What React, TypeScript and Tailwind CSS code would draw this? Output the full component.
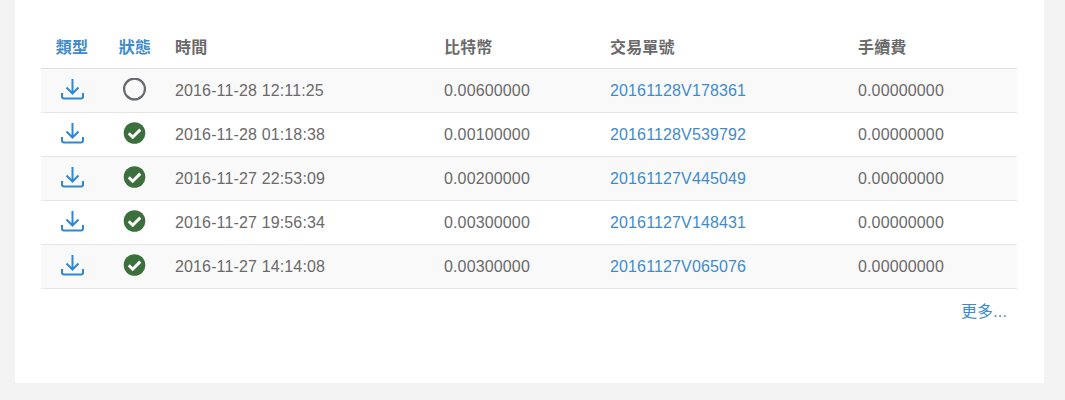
const rows = [
  { time: '2016-11-28 12:11:25', btc: '0.00600000', tx: '20161128V178361', done: false },
  { time: '2016-11-28 01:18:38', btc: '0.00100000', tx: '20161128V539792', done: true },
  { time: '2016-11-27 22:53:09', btc: '0.00200000', tx: '20161127V445049', done: true },
  { time: '2016-11-27 19:56:34', btc: '0.00300000', tx: '20161127V148431', done: true },
  { time: '2016-11-27 14:14:08', btc: '0.00300000', tx: '20161127V065076', done: true },
];

function DownloadIcon() {
  return (
    <svg width="24" height="24" viewBox="0 0 24 24" fill="none" stroke="#2f88d4" strokeWidth="2" className="block mx-auto">
      <path d="M12.5 1v14.5M6.5 9.5l6 6 6-6" />
      <path d="M2 15v3.5a2 2 0 0 0 2 2h17a2 2 0 0 0 2-2V15" />
    </svg>
  );
}

function StatusIcon({ done }: { done: boolean }) {
  if (!done) {
    return (
      <svg width="24" height="24" viewBox="0 0 24 24" fill="none" className="block mx-auto">
        <circle cx="11.5" cy="11" r="10.4" stroke="#666a70" strokeWidth="2.2" />
      </svg>
    );
  }
  return (
    <svg width="24" height="24" viewBox="0 0 24 24" fill="none" className="block mx-auto">
      <circle cx="11.5" cy="11" r="10.8" fill="#3b6f3c" />
      <path d="M5.8 11.3l3.9 3.9 7.6-7.6" stroke="#fff" strokeWidth="3" />
    </svg>
  );
}

export default function App() {
  return (
    <div className="h-[400px] bg-[#f3f3f3] px-[15px] pb-[17px] font-['Liberation_Sans','Noto_Sans_CJK_TC',sans-serif] text-[16px] tracking-[0.14px] text-[#6a6a6a]">
      <div className="h-full w-[1029px] bg-white px-[26px] pt-[26px]">
        <table className="w-[976px] table-fixed border-collapse">
          <colgroup>
            <col className="w-[62px]" />
            <col className="w-[64px]" />
            <col className="w-[269px]" />
            <col className="w-[166px]" />
            <col className="w-[248px]" />
            <col className="w-[167px]" />
          </colgroup>
          <thead>
            <tr className="h-[42px] border-b border-[#ddd] text-left font-bold">
              <th className="pt-[3px] text-center text-[#428bca]">類型</th>
              <th className="pt-[3px] text-center text-[#428bca]">狀態</th>
              <th className="px-2 pt-[3px]">時間</th>
              <th className="px-2 pt-[3px]">比特幣</th>
              <th className="px-2 pt-[3px]">交易單號</th>
              <th className="px-2 pt-[3px]">手續費</th>
            </tr>
          </thead>
          <tbody>
            {rows.map((row, i) => (
              <tr key={row.tx} className={`h-[44px] border-b border-[#e5e5e5] ${i % 2 === 0 ? 'bg-[#f9f9f9]' : ''}`}>
                <td><DownloadIcon /></td>
                <td><StatusIcon done={row.done} /></td>
                <td className="px-2 pt-[2px]">{row.time}</td>
                <td className="px-2 pt-[2px]">{row.btc}</td>
                <td className="px-2 pt-[2px] text-[#428bca]">{row.tx}</td>
                <td className="px-2 pt-[2px]">0.00000000</td>
              </tr>
            ))}
          </tbody>
        </table>
        <div className="mt-[11px] w-[976px] pr-[10px] text-right text-[#428bca]">更多...</div>
      </div>
    </div>
  );
}
